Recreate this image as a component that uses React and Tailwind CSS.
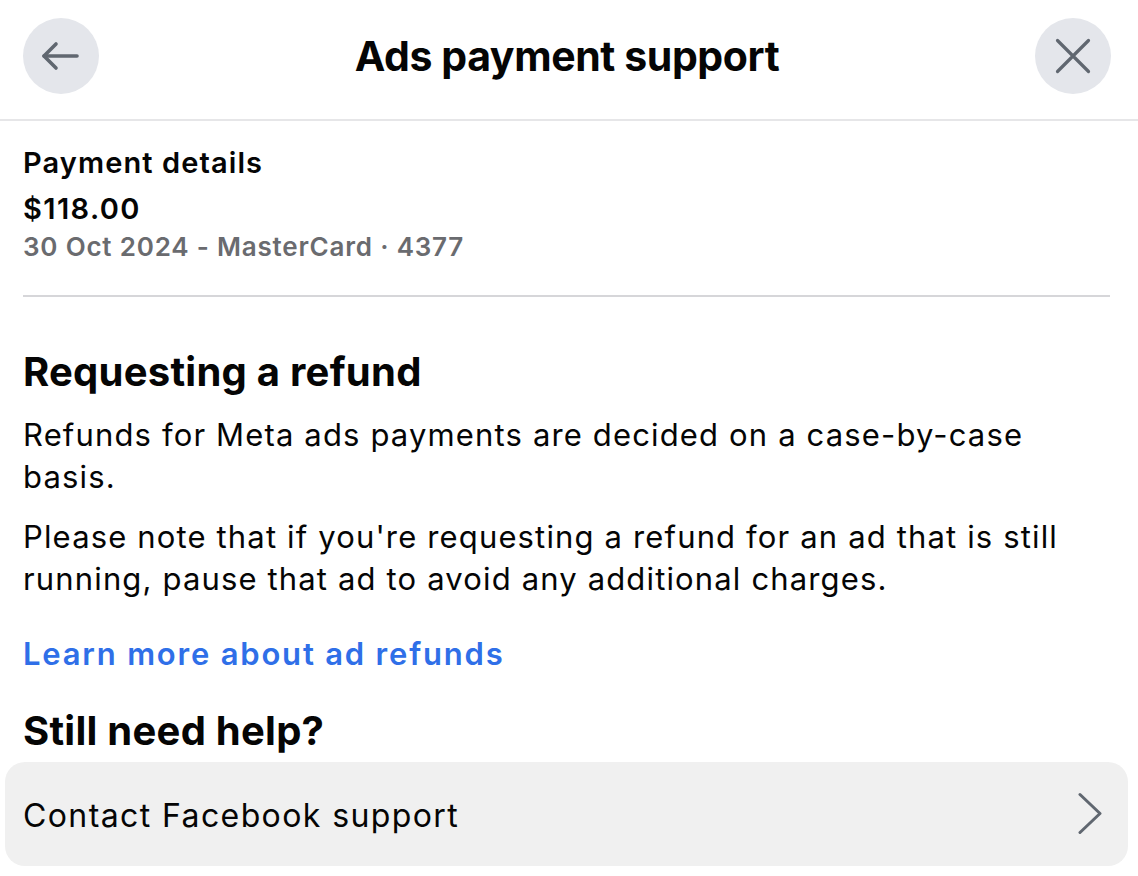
import React from "react";

export default function App() {
  return (
    <div className="w-[1138px] h-[876px] bg-white text-[#050505] overflow-hidden" style={{ fontFamily: "Inter, 'Liberation Sans', sans-serif" }}>
      <header className="h-[121px] border-b-2 border-[#e6e6e8] flex items-center justify-between pl-[23px] pr-[27px] pb-[8px]">
        <button className="w-[76px] h-[76px] rounded-full bg-[#e4e6eb] flex items-center justify-center">
          <svg width="76" height="76" viewBox="0 0 76 76" fill="none" stroke="#606770" strokeWidth="3.6" strokeLinecap="round" strokeLinejoin="round">
            <path d="M21 38H54" />
            <path d="M33 26L21 38L33 50" />
          </svg>
        </button>
        <h1 className="text-[41px] font-bold tracking-[-0.4px] leading-[50px]">Ads payment support</h1>
        <button className="w-[76px] h-[76px] rounded-full bg-[#e4e6eb] flex items-center justify-center">
          <svg width="76" height="76" viewBox="0 0 76 76" fill="none" stroke="#606770" strokeWidth="3.2" strokeLinecap="round">
            <path d="M22.5 22.5L53.5 53.5M53.5 22.5L22.5 53.5" />
          </svg>
        </button>
      </header>

      <section className="ml-[23px] mr-[28px] pt-[22px] pb-[36px] border-b-2 border-[#d6d6d9]">
        <div className="text-[29px] font-semibold leading-[40px] tracking-[1.1px]">Payment details</div>
        <div className="text-[29px] font-semibold leading-[52px] tracking-[1.4px]">$118.00</div>
        <div className="text-[26px] font-semibold text-[#6a6b6f] leading-[24px] tracking-[0.8px]">30 Oct 2024 - MasterCard · 4377</div>
      </section>

      <section className="px-[23px] pt-[48px]">
        <h2 className="text-[40px] font-bold leading-[54px] tracking-[0.25px]">Requesting a refund</h2>
        <p className="text-[31px] leading-[42px] mt-[15px] tracking-[1.15px]">Refunds for Meta ads payments are decided on a case-by-case basis.</p>
        <p className="text-[31px] leading-[42px] mt-[18px] tracking-[1.15px]">Please note that if you're requesting a refund for an ad that is still running, pause that ad to avoid any additional charges.</p>
        <a className="block text-[31px] font-semibold text-[#2f6fe8] leading-[42px] mt-[33px] tracking-[1.8px]">Learn more about ad refunds</a>
        <h2 className="text-[40px] font-bold leading-[54px] mt-[29px] tracking-[0.25px]">Still need help?</h2>
      </section>

      <div className="ml-[5px] mr-[10px] mt-[4px] h-[104px] rounded-[20px] bg-[#f0f0f0] flex items-center justify-between pl-[18px] pr-[26px]">
        <span className="text-[32px] tracking-[1.4px] leading-[42px] pt-[3px]">Contact Facebook support</span>
        <svg width="24" height="44" viewBox="0 0 24 44" fill="none" stroke="#606770" strokeWidth="3" strokeLinecap="round" strokeLinejoin="round">
          <path d="M2 2.5L22 21.5L2 40.5" />
        </svg>
      </div>
    </div>
  );
}
